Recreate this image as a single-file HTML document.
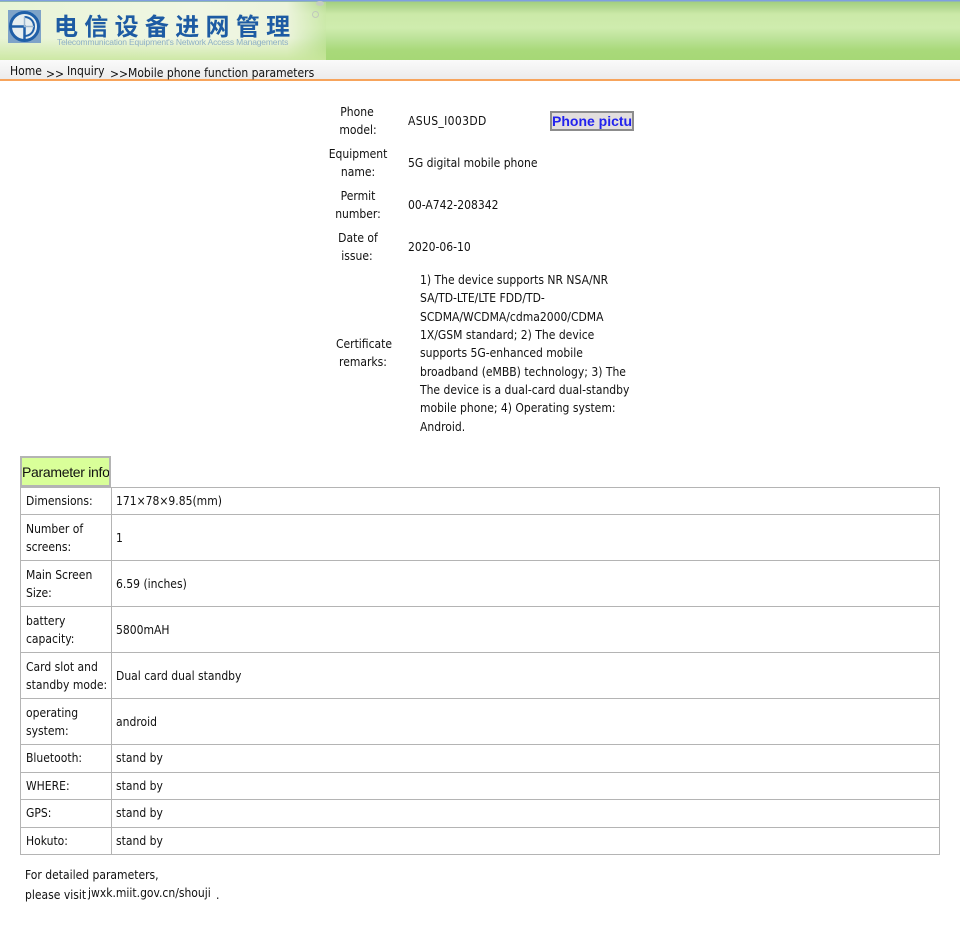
<!DOCTYPE html>
<html><head><meta charset="utf-8">
<style>
html,body{margin:0;padding:0;background:#fff;width:960px;height:936px;overflow:hidden}
body{position:relative;font-family:"DejaVu Sans Condensed","DejaVu Sans","Noto Sans CJK SC",sans-serif;font-stretch:condensed;font-size:12px;color:#111}
.t{position:absolute;white-space:nowrap;line-height:16px;height:16px;letter-spacing:0;margin-top:-1px}
.c{transform:translateX(-50%)}
.b{position:absolute;background:#b4b4b4}
</style></head><body>
<div style="position:absolute;left:0;top:0;width:960px;height:60px;background:linear-gradient(180deg,#7f9fe0 0,#7f9fe0 1px,#a4cf80 2px,#b6da93 8px,#cbe9a8 14px,#cfecae 28px,#bde39a 38px,#a9d97a 50px,#a6d876 60px)"></div>
<div style="position:absolute;left:0;top:2px;width:326px;height:58px;background:linear-gradient(90deg,rgba(232,244,214,1) 0,rgba(240,246,228,1) 60%,rgba(236,244,220,1) 88%,rgba(200,230,165,.4) 100%)"></div>
<div style="position:absolute;left:0;top:38px;width:326px;height:22px;background:linear-gradient(180deg,rgba(215,236,180,0),rgba(200,230,155,.85))"></div>
<svg style="position:absolute;left:8px;top:10px" width="33" height="33" viewBox="0 0 33 33"><rect width="33" height="33" fill="#7ea3c8"/><circle cx="16.5" cy="16.5" r="14" fill="#e6eef0" stroke="#1f5fa8" stroke-width="3"/><path d="M2.5 16.5H16.5V29.5" fill="none" stroke="#1f5fa8" stroke-width="2.5"/><path d="M16.5 7C22 7 26 11 26 16.5C26 22 22 26 16.5 26" fill="none" stroke="#1f5fa8" stroke-width="2"/><path d="M16.5 7V16.5H26" fill="none" stroke="#9db8cf" stroke-width="1.5"/></svg>
<div style="position:absolute;left:54px;top:8px;font:bold 24px/34px 'Noto Sans CJK SC',sans-serif;color:#1d5ba3;letter-spacing:6.3px;white-space:nowrap">电信设备进网管理</div>
<div style="position:absolute;left:57px;top:37px;font:8.5px/11px 'Liberation Sans',sans-serif;color:#8eb0c6;white-space:nowrap;letter-spacing:-.17px">Telecommunication Equipment's Network Access Managements</div>
<div style="position:absolute;left:312px;top:11px;width:5px;height:5px;border:1px solid #c0c8bc;border-radius:50%"></div>
<div style="position:absolute;left:316px;top:1px;width:8px;height:5px;background:#c4ccc0;border-radius:50%"></div>
<div style="position:absolute;left:0;top:60px;width:960px;height:19px;background:linear-gradient(180deg,#fafafa,#ececec)"></div>
<div style="position:absolute;left:0;top:79px;width:960px;height:2px;background:#f7a45c"></div>
<div class="t" style="left:10px;top:64px;">Home</div>
<div class="t" style="left:46px;top:67px;">&gt;&gt;</div>
<div class="t" style="left:67px;top:64px;">Inquiry</div>
<div class="t" style="left:110px;top:67px;">&gt;&gt;</div>
<div class="t" style="left:128px;top:66px;">Mobile phone function parameters</div>

<div class="t c" style="left:357px;top:105px">Phone</div>
<div class="t c" style="left:358px;top:123px">model:</div>
<div class="t" style="left:408px;top:114px;letter-spacing:.35px">ASUS_I003DD</div>
<div style="position:absolute;left:550px;top:111px;width:80px;height:16px;border:2px solid #8c8c8c;background:#e2dede;overflow:hidden;white-space:nowrap;font:bold 14px/16px 'Liberation Sans',sans-serif;color:#2222ee">Phone picture</div>
<div class="t c" style="left:358px;top:147px">Equipment</div>
<div class="t c" style="left:358px;top:165px">name:</div>
<div class="t" style="left:408px;top:156px">5G digital mobile phone</div>
<div class="t c" style="left:358px;top:189px">Permit</div>
<div class="t c" style="left:358px;top:207px">number:</div>
<div class="t" style="left:408px;top:198px">00-A742-208342</div>
<div class="t c" style="left:358px;top:231px">Date of</div>
<div class="t c" style="left:357px;top:249px">issue:</div>
<div class="t" style="left:408px;top:240px">2020-06-10</div>
<div class="t c" style="left:364px;top:337px">Certificate</div>
<div class="t c" style="left:363px;top:355px">remarks:</div>
<div class="t" style="left:420px;top:273px">1) The device supports NR NSA/NR</div>
<div class="t" style="left:420px;top:291px">SA/TD-LTE/LTE FDD/TD-</div>
<div class="t" style="left:420px;top:310px">SCDMA/WCDMA/cdma2000/CDMA</div>
<div class="t" style="left:420px;top:328px">1X/GSM standard; 2) The device</div>
<div class="t" style="left:420px;top:346px">supports 5G-enhanced mobile</div>
<div class="t" style="left:420px;top:365px">broadband (eMBB) technology; 3) The</div>
<div class="t" style="left:420px;top:383px">The device is a dual-card dual-standby</div>
<div class="t" style="left:420px;top:401px">mobile phone; 4) Operating system:</div>
<div class="t" style="left:420px;top:420px">Android.</div>

<div style="position:absolute;left:20px;top:456px;width:87px;height:27px;border:2px solid #b4b4b4;background:#d9ff99;overflow:hidden;white-space:nowrap;font:14px/28px 'Liberation Sans',sans-serif;letter-spacing:-.3px;color:#111">Parameter information</div>

<div class="b" style="left:20px;top:487px;width:920px;height:1px"></div>
<div class="b" style="left:20px;top:514px;width:920px;height:1px"></div>
<div class="b" style="left:20px;top:560px;width:920px;height:1px"></div>
<div class="b" style="left:20px;top:606px;width:920px;height:1px"></div>
<div class="b" style="left:20px;top:652px;width:920px;height:1px"></div>
<div class="b" style="left:20px;top:698px;width:920px;height:1px"></div>
<div class="b" style="left:20px;top:744px;width:920px;height:1px"></div>
<div class="b" style="left:20px;top:772px;width:920px;height:1px"></div>
<div class="b" style="left:20px;top:799px;width:920px;height:1px"></div>
<div class="b" style="left:20px;top:827px;width:920px;height:1px"></div>
<div class="b" style="left:20px;top:854px;width:920px;height:1px"></div>
<div class="b" style="left:20px;top:487px;width:1px;height:368px"></div>
<div class="b" style="left:111px;top:487px;width:1px;height:368px"></div>
<div class="b" style="left:939px;top:487px;width:1px;height:368px"></div>

<div class="t" style="left:26px;top:494px">Dimensions:</div>
<div class="t" style="left:116px;top:494px">171×78×9.85(mm)</div>
<div class="t" style="left:26px;top:522px">Number of</div>
<div class="t" style="left:26px;top:540px">screens:</div>
<div class="t" style="left:116px;top:531px">1</div>
<div class="t" style="left:26px;top:568px">Main Screen</div>
<div class="t" style="left:26px;top:586px">Size:</div>
<div class="t" style="left:116px;top:577px">6.59 (inches)</div>
<div class="t" style="left:26px;top:614px">battery</div>
<div class="t" style="left:26px;top:632px">capacity:</div>
<div class="t" style="left:116px;top:623px">5800mAH</div>
<div class="t" style="left:26px;top:660px">Card slot and</div>
<div class="t" style="left:26px;top:678px">standby mode:</div>
<div class="t" style="left:116px;top:669px">Dual card dual standby</div>
<div class="t" style="left:26px;top:706px">operating</div>
<div class="t" style="left:26px;top:724px">system:</div>
<div class="t" style="left:116px;top:715px">android</div>
<div class="t" style="left:26px;top:751px">Bluetooth:</div>
<div class="t" style="left:116px;top:751px">stand by</div>
<div class="t" style="left:26px;top:779px">WHERE:</div>
<div class="t" style="left:116px;top:779px">stand by</div>
<div class="t" style="left:26px;top:806px">GPS:</div>
<div class="t" style="left:116px;top:806px">stand by</div>
<div class="t" style="left:26px;top:834px">Hokuto:</div>
<div class="t" style="left:116px;top:834px">stand by</div>

<div class="t" style="left:25px;top:868px">For detailed parameters,</div>
<div class="t" style="left:25px;top:888px">please visit</div>
<div class="t" style="left:88px;top:886px">jwxk.miit.gov.cn/shouji</div>
<div class="t" style="left:216px;top:888px">.</div>
</body></html>
